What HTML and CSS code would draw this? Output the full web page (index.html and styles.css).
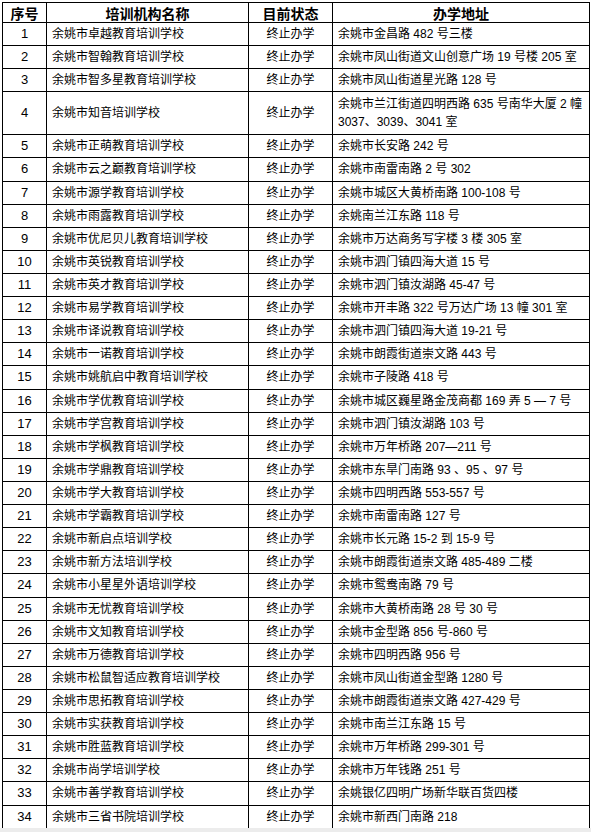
FILE: index.html
```html
<!DOCTYPE html>
<html lang="zh-CN">
<head>
<meta charset="utf-8">
<title>余姚市终止办学培训机构名单</title>
<link rel="stylesheet" href="styles.css">
</head>
<body>
<div class="page">
  <table class="list">
    <colgroup>
      <col class="c-no">
      <col class="c-name">
      <col class="c-state">
      <col class="c-addr">
    </colgroup>
    <thead>
      <tr class="head">
        <th>序号</th>
        <th>培训机构名称</th>
        <th>目前状态</th>
        <th>办学地址</th>
      </tr>
    </thead>
    <tbody>
      <tr><td class="no">1</td><td class="name">余姚市卓越教育培训学校</td><td class="state">终止办学</td><td class="addr">余姚市金昌路 482 号三楼</td></tr>
      <tr><td class="no">2</td><td class="name">余姚市智翰教育培训学校</td><td class="state">终止办学</td><td class="addr">余姚市凤山街道文山创意广场 19 号楼 205 室</td></tr>
      <tr><td class="no">3</td><td class="name">余姚市智多星教育培训学校</td><td class="state">终止办学</td><td class="addr">余姚市凤山街道星光路 128 号</td></tr>
      <tr class="tall"><td class="no">4</td><td class="name">余姚市知音培训学校</td><td class="state">终止办学</td><td class="addr">余姚市兰江街道四明西路 635 号南华大厦 2 幢<br>3037、3039、3041 室</td></tr>
      <tr><td class="no">5</td><td class="name">余姚市正萌教育培训学校</td><td class="state">终止办学</td><td class="addr">余姚市长安路 242 号</td></tr>
      <tr><td class="no">6</td><td class="name">余姚市云之巅教育培训学校</td><td class="state">终止办学</td><td class="addr">余姚市南雷南路 2 号 302</td></tr>
      <tr><td class="no">7</td><td class="name">余姚市源学教育培训学校</td><td class="state">终止办学</td><td class="addr">余姚市城区大黄桥南路 100-108 号</td></tr>
      <tr><td class="no">8</td><td class="name">余姚市雨露教育培训学校</td><td class="state">终止办学</td><td class="addr">余姚南兰江东路 118 号</td></tr>
      <tr><td class="no">9</td><td class="name">余姚市优尼贝儿教育培训学校</td><td class="state">终止办学</td><td class="addr">余姚市万达商务写字楼 3 楼 305 室</td></tr>
      <tr><td class="no">10</td><td class="name">余姚市英锐教育培训学校</td><td class="state">终止办学</td><td class="addr">余姚市泗门镇四海大道 15 号</td></tr>
      <tr><td class="no">11</td><td class="name">余姚市英才教育培训学校</td><td class="state">终止办学</td><td class="addr">余姚市泗门镇汝湖路 45-47 号</td></tr>
      <tr><td class="no">12</td><td class="name">余姚市易学教育培训学校</td><td class="state">终止办学</td><td class="addr">余姚市开丰路 322 号万达广场 13 幢 301 室</td></tr>
      <tr><td class="no">13</td><td class="name">余姚市译说教育培训学校</td><td class="state">终止办学</td><td class="addr">余姚市泗门镇四海大道 19-21 号</td></tr>
      <tr><td class="no">14</td><td class="name">余姚市一诺教育培训学校</td><td class="state">终止办学</td><td class="addr">余姚市朗霞街道崇文路 443 号</td></tr>
      <tr><td class="no">15</td><td class="name">余姚市姚航启中教育培训学校</td><td class="state">终止办学</td><td class="addr">余姚市子陵路 418 号</td></tr>
      <tr><td class="no">16</td><td class="name">余姚市学优教育培训学校</td><td class="state">终止办学</td><td class="addr">余姚市城区巍星路金茂商都 169 弄 5 — 7 号</td></tr>
      <tr><td class="no">17</td><td class="name">余姚市学宫教育培训学校</td><td class="state">终止办学</td><td class="addr">余姚市泗门镇汝湖路 103 号</td></tr>
      <tr><td class="no">18</td><td class="name">余姚市学枫教育培训学校</td><td class="state">终止办学</td><td class="addr">余姚市万年桥路 207—211 号</td></tr>
      <tr><td class="no">19</td><td class="name">余姚市学鼎教育培训学校</td><td class="state">终止办学</td><td class="addr">余姚市东旱门南路 93 、95 、97 号</td></tr>
      <tr><td class="no">20</td><td class="name">余姚市学大教育培训学校</td><td class="state">终止办学</td><td class="addr">余姚市四明西路 553-557 号</td></tr>
      <tr><td class="no">21</td><td class="name">余姚市学霸教育培训学校</td><td class="state">终止办学</td><td class="addr">余姚市南雷南路 127 号</td></tr>
      <tr><td class="no">22</td><td class="name">余姚市新启点培训学校</td><td class="state">终止办学</td><td class="addr">余姚市长元路 15-2 到 15-9 号</td></tr>
      <tr><td class="no">23</td><td class="name">余姚市新方法培训学校</td><td class="state">终止办学</td><td class="addr">余姚市朗霞街道崇文路 485-489 二楼</td></tr>
      <tr><td class="no">24</td><td class="name">余姚市小星星外语培训学校</td><td class="state">终止办学</td><td class="addr">余姚市鸳鸯南路 79 号</td></tr>
      <tr><td class="no">25</td><td class="name">余姚市无忧教育培训学校</td><td class="state">终止办学</td><td class="addr">余姚市大黄桥南路 28 号 30 号</td></tr>
      <tr><td class="no">26</td><td class="name">余姚市文知教育培训学校</td><td class="state">终止办学</td><td class="addr">余姚市金型路 856 号-860 号</td></tr>
      <tr><td class="no">27</td><td class="name">余姚市万德教育培训学校</td><td class="state">终止办学</td><td class="addr">余姚市四明西路 956 号</td></tr>
      <tr><td class="no">28</td><td class="name">余姚市松鼠智适应教育培训学校</td><td class="state">终止办学</td><td class="addr">余姚市凤山街道金型路 1280 号</td></tr>
      <tr><td class="no">29</td><td class="name">余姚市思拓教育培训学校</td><td class="state">终止办学</td><td class="addr">余姚市朗霞街道崇文路 427-429 号</td></tr>
      <tr><td class="no">30</td><td class="name">余姚市实获教育培训学校</td><td class="state">终止办学</td><td class="addr">余姚市南兰江东路 15 号</td></tr>
      <tr><td class="no">31</td><td class="name">余姚市胜蓝教育培训学校</td><td class="state">终止办学</td><td class="addr">余姚市万年桥路 299-301 号</td></tr>
      <tr><td class="no">32</td><td class="name">余姚市尚学培训学校</td><td class="state">终止办学</td><td class="addr">余姚市万年钱路 251 号</td></tr>
      <tr><td class="no">33</td><td class="name">余姚市善学教育培训学校</td><td class="state">终止办学</td><td class="addr">余姚银亿四明广场新华联百货四楼</td></tr>
      <tr><td class="no">34</td><td class="name">余姚市三省书院培训学校</td><td class="state">终止办学</td><td class="addr">余姚市新西门南路 218</td></tr>
    </tbody>
  </table>
</div>
<div class="edge"></div>
</body>
</html>
```

FILE: styles.css
```css
html, body {
  margin: 0;
  padding: 0;
}

body {
  background: #ececec;
  width: 591px;
  font-family: "Liberation Sans", "Noto Sans CJK SC", sans-serif;
  color: #000;
}

.page {
  height: 828px;
  overflow: hidden;
  background: #fff;
  padding: 2px 0 0 2px;
  box-sizing: border-box;
}

.edge {
  height: 4px;
  background: #ececec;
}

.list {
  border-collapse: collapse;
  table-layout: fixed;
  width: 587px;
}

.c-no { width: 44px; }
.c-name { width: 202px; }
.c-state { width: 84px; }
.c-addr { width: 257px; }

.list th,
.list td {
  border: 1px solid #000;
  padding: 0 5px;
  vertical-align: middle;
  white-space: nowrap;
  overflow: hidden;
}

.head {
  height: 20px;
}

.head th {
  font-family: "Noto Sans CJK SC", sans-serif;
  font-weight: 700;
  font-size: 14px;
  line-height: 18px;
  text-align: center;
  padding: 0;
}

.list tbody tr {
  height: 23.12px;
}

.list tbody tr.tall {
  height: 43px;
}

.list td {
  font-size: 12px;
  line-height: 18px;
}

.no {
  text-align: center;
  font-size: 13px;
}

.list td.no {
  font-size: 13px;
}

.state {
  text-align: center;
}

.name,
.addr {
  text-align: left;
}
```
